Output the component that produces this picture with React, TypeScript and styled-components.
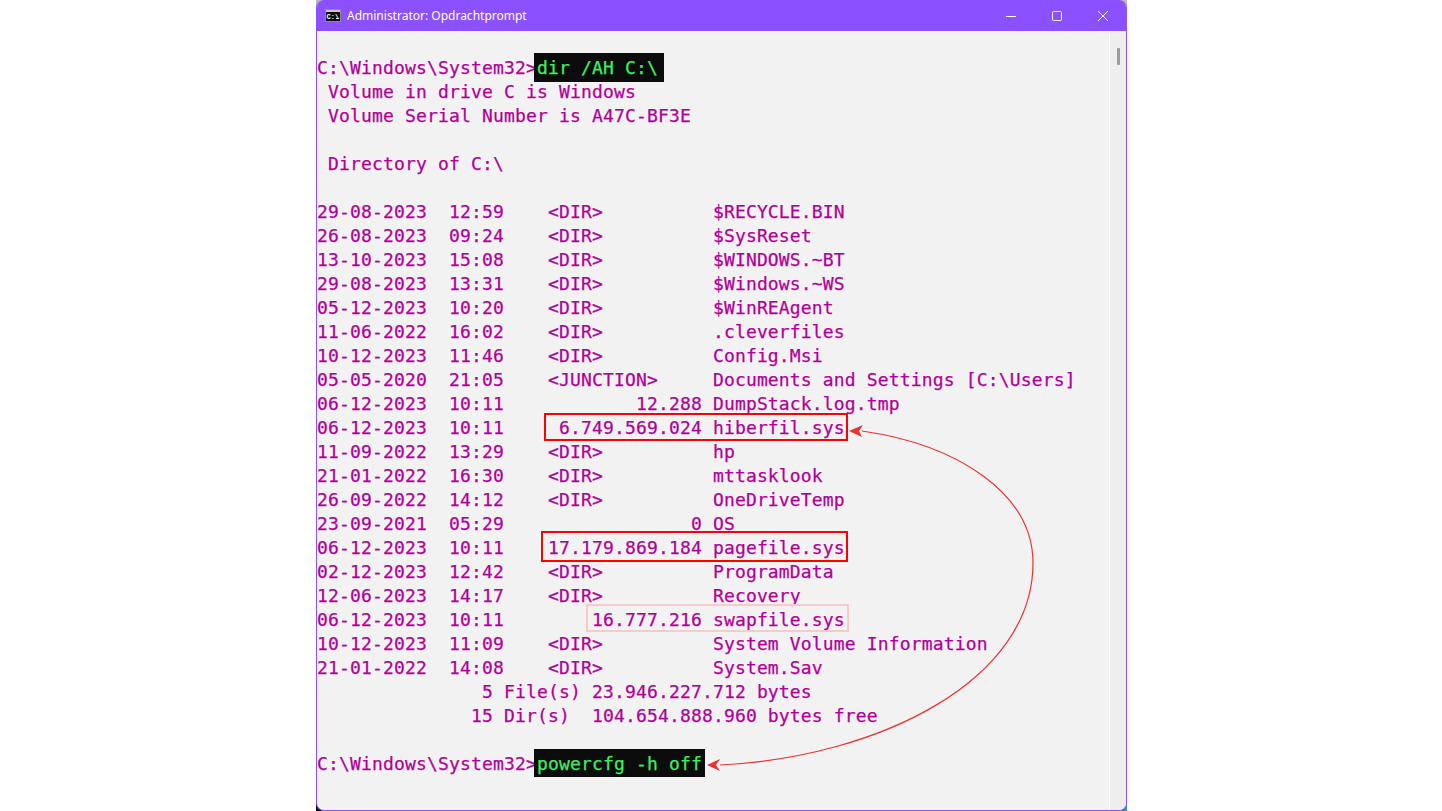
import React from 'react';
import styled, { createGlobalStyle } from 'styled-components';

const purple = '#8b50ff';

const GlobalStyle = createGlobalStyle`
  html, body {
    margin: 0;
    padding: 0;
    background: #ffffff;
    overflow: hidden;
  }
`;

const Page = styled.div`
  display: flex;
  justify-content: center;
  height: 811px;
  padding-left: 1px;
`;

const Window = styled.div`
  position: relative;
  width: 811px;
  height: 811px;
`;

const Corner = styled.div<{ $color: string; $side: string; $edge: string }>`
  position: absolute;
  ${(p) => p.$side}: 0;
  ${(p) => p.$edge}: 0;
  width: 8px;
  height: 8px;
  background: ${(p) => p.$color};
`;

const Frame = styled.div`
  position: relative;
  display: flex;
  flex-direction: column;
  height: 100%;
  box-sizing: border-box;
  border: 1px solid ${purple};
  border-top: 0;
  border-radius: 8px;
  overflow: hidden;
  background: #f2f2f2;
`;

const TitleBar = styled.div`
  display: flex;
  align-items: center;
  flex: none;
  height: 31px;
  padding-left: 8px;
  background: ${purple};
`;

const TitleText = styled.span`
  margin-left: 6px;
  font: 12px 'Noto Sans', sans-serif;
  color: #ffffff;
`;

const Controls = styled.div`
  display: flex;
  margin-left: auto;
`;

const ControlButton = styled.div`
  display: flex;
  align-items: center;
  justify-content: center;
  width: 46px;
  height: 31px;
`;

const Body = styled.div`
  display: flex;
  flex: 1;
  min-height: 0;
`;

const Terminal = styled.div`
  position: relative;
  flex: 1;
  padding-top: 25px;
  font-family: 'DejaVu Sans Mono', monospace;
  font-size: 18px;
  letter-spacing: 0.16px;
  line-height: 24px;
  color: #b0009a;
  white-space: pre;
  -webkit-text-stroke: 0.25px currentColor;
`;

const Line = styled.div`
  height: 24px;
`;

const Command = styled.span<{ $right: number; $bottom: number }>`
  position: relative;
  z-index: 0;
  display: inline-block;
  height: 24px;
  color: #3df05f;

  &::before {
    content: '';
    position: absolute;
    z-index: -1;
    top: -3px;
    bottom: ${(p) => -p.$bottom}px;
    left: -3px;
    right: ${(p) => -p.$right}px;
    background: #0c0c0c;
  }
`;

const Highlight = styled.div<{ $x: number; $y: number; $w: number; $h: number; $faded?: boolean }>`
  position: absolute;
  left: ${(p) => p.$x}px;
  top: ${(p) => p.$y}px;
  width: ${(p) => p.$w}px;
  height: ${(p) => p.$h}px;
  box-sizing: border-box;
  border: 2px solid ${(p) => (p.$faded ? '#f8caca' : '#ff0000')};
`;

const Arrows = styled.svg`
  position: absolute;
  left: 0;
  top: 0;
  pointer-events: none;
`;

const ScrollTrack = styled.div`
  display: flex;
  flex-direction: column;
  align-items: center;
  flex: none;
  width: 16px;
  padding-top: 17px;
  border-left: 1px solid #ffffff;
  background: #eeeeee;
`;

const ScrollThumb = styled.div`
  width: 3px;
  height: 17px;
  border-radius: 1px;
  background: #9b9b9b;
`;

const listing = [
  ' Volume in drive C is Windows',
  ' Volume Serial Number is A47C-BF3E',
  '',
  ' Directory of C:\\',
  '',
  '29-08-2023  12:59    <DIR>          $RECYCLE.BIN',
  '26-08-2023  09:24    <DIR>          $SysReset',
  '13-10-2023  15:08    <DIR>          $WINDOWS.~BT',
  '29-08-2023  13:31    <DIR>          $Windows.~WS',
  '05-12-2023  10:20    <DIR>          $WinREAgent',
  '11-06-2022  16:02    <DIR>          .cleverfiles',
  '10-12-2023  11:46    <DIR>          Config.Msi',
  '05-05-2020  21:05    <JUNCTION>     Documents and Settings [C:\\Users]',
  '06-12-2023  10:11            12.288 DumpStack.log.tmp',
  '06-12-2023  10:11     6.749.569.024 hiberfil.sys',
  '11-09-2022  13:29    <DIR>          hp',
  '21-01-2022  16:30    <DIR>          mttasklook',
  '26-09-2022  14:12    <DIR>          OneDriveTemp',
  '23-09-2021  05:29                 0 OS',
  '06-12-2023  10:11    17.179.869.184 pagefile.sys',
  '02-12-2023  12:42    <DIR>          ProgramData',
  '12-06-2023  14:17    <DIR>          Recovery',
  '06-12-2023  10:11        16.777.216 swapfile.sys',
  '10-12-2023  11:09    <DIR>          System Volume Information',
  '21-01-2022  14:08    <DIR>          System.Sav',
  '               5 File(s) 23.946.227.712 bytes',
  '              15 Dir(s)  104.654.888.960 bytes free',
  '',
];

const PROMPT = 'C:\\Windows\\System32>';

const ConsoleIcon = () => (
  <svg width="16" height="13" viewBox="0 0 16 13">
    <rect x="0.5" y="0.5" width="15" height="12" fill="#0c0c0c" stroke="#8a8a8a" />
    <rect x="1" y="1" width="14" height="2" fill="#c8c8c8" />
    <text x="1.5" y="10" fontFamily="'Liberation Mono', monospace" fontSize="7" fontWeight="700" fill="#ffffff">
      C:\
    </text>
    <rect x="11" y="9" width="3" height="1" fill="#ffffff" />
  </svg>
);

const MinimizeIcon = () => (
  <svg width="10" height="10" viewBox="0 0 10 10">
    <path d="M0 5.5h10" stroke="#fff" strokeWidth="1" />
  </svg>
);

const MaximizeIcon = () => (
  <svg width="10" height="10" viewBox="0 0 10 10">
    <rect x="0.5" y="0.5" width="9" height="9" rx="1" fill="none" stroke="#fff" strokeWidth="1" />
  </svg>
);

const CloseIcon = () => (
  <svg width="10" height="10" viewBox="0 0 10 10">
    <path d="M0 0l10 10M10 0L0 10" stroke="#fff" strokeWidth="1" />
  </svg>
);

export default function App() {
  return (
    <>
      <GlobalStyle />
      <Page>
        <Window>
          <Corner $color="#b9b9b9" $side="left" $edge="top" />
          <Corner $color="#b9b9b9" $side="right" $edge="top" />
          <Corner $color="#0a0a14" $side="left" $edge="bottom" />
          <Corner $color="#2f8fb0" $side="right" $edge="bottom" />
          <Frame>
            <TitleBar>
              <ConsoleIcon />
              <TitleText>Administrator: Opdrachtprompt</TitleText>
              <Controls>
                <ControlButton>
                  <MinimizeIcon />
                </ControlButton>
                <ControlButton>
                  <MaximizeIcon />
                </ControlButton>
                <ControlButton>
                  <CloseIcon />
                </ControlButton>
              </Controls>
            </TitleBar>
            <Body>
              <Terminal>
                <Line>
                  {PROMPT}
                  <Command $right={6} $bottom={2}>dir /AH C:\</Command>
                </Line>
                {listing.map((row, i) => (
                  <Line key={i}>{row}</Line>
                ))}
                <Line>
                  {PROMPT}
                  <Command $right={3} $bottom={1}>powercfg -h off</Command>
                </Line>

                <Highlight $x={227} $y={382} $w={304} $h={28} />
                <Highlight $x={224} $y={500} $w={307} $h={31} />
                <Highlight $x={269} $y={573} $w={263} $h={28} $faded />

                <Arrows width="792" height="780" viewBox="0 0 792 780">
                  <path
                    d="M545 400C643 414 716 464 716 532C716 649 563 726 403 734"
                    fill="none"
                    stroke="#f02f2f"
                    strokeWidth="1.2"
                  />
                  <polygon points="532,400 546,394 542,400 545,406" fill="#f02f2f" />
                  <polygon points="390,734 403,728 399,734 403,740" fill="#f02f2f" />
                </Arrows>
              </Terminal>
              <ScrollTrack>
                <ScrollThumb />
              </ScrollTrack>
            </Body>
          </Frame>
        </Window>
      </Page>
    </>
  );
}
